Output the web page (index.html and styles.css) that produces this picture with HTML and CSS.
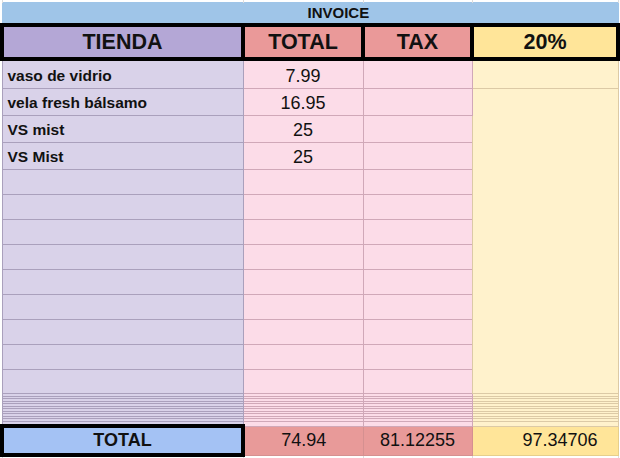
FILE: index.html
```html
<!DOCTYPE html>
<html lang="es">
<head>
<meta charset="utf-8">
<title>Invoice</title>
<link rel="stylesheet" href="styles.css">
</head>
<body>
<table class="sheet">
  <colgroup>
    <col class="c-tienda"><col class="c-total"><col class="c-tax"><col class="c-pct">
  </colgroup>
  <tbody>
    <tr class="strip"><td></td><td></td><td></td><td></td></tr>
    <tr class="title"><td colspan="4">INVOICE</td></tr>
    <tr class="head">
      <th class="p">TIENDA</th><th class="r">TOTAL</th><th class="r">TAX</th><th class="y">20%</th>
    </tr>
    <tr class="row r1"><td class="p name">vaso de vidrio</td><td class="k num">7.99</td><td class="k"></td><td class="y"></td></tr>
    <tr class="row r27"><td class="p name">vela fresh bálsamo</td><td class="k num">16.95</td><td class="k"></td><td class="y merged" rowspan="12"></td></tr>
    <tr class="row r27"><td class="p name">VS mist</td><td class="k num">25</td><td class="k"></td></tr>
    <tr class="row r27"><td class="p name">VS Mist</td><td class="k num">25</td><td class="k"></td></tr>
    <tr class="row r25"><td class="p"></td><td class="k"></td><td class="k"></td></tr>
    <tr class="row r25"><td class="p"></td><td class="k"></td><td class="k"></td></tr>
    <tr class="row r25"><td class="p"></td><td class="k"></td><td class="k"></td></tr>
    <tr class="row r25"><td class="p"></td><td class="k"></td><td class="k"></td></tr>
    <tr class="row r25"><td class="p"></td><td class="k"></td><td class="k"></td></tr>
    <tr class="row r25"><td class="p"></td><td class="k"></td><td class="k"></td></tr>
    <tr class="row r25"><td class="p"></td><td class="k"></td><td class="k"></td></tr>
    <tr class="row r25"><td class="p"></td><td class="k"></td><td class="k"></td></tr>
    <tr class="row r24"><td class="p"></td><td class="k"></td><td class="k"></td></tr>
    <tr class="thin t3"><td class="p"></td><td class="k"></td><td class="k"></td><td class="y"></td></tr>
    <tr class="thin t2"><td class="p"></td><td class="k"></td><td class="k"></td><td class="y"></td></tr>
    <tr class="thin t3"><td class="p"></td><td class="k"></td><td class="k"></td><td class="y"></td></tr>
    <tr class="thin t2"><td class="p"></td><td class="k"></td><td class="k"></td><td class="y"></td></tr>
    <tr class="thin t3"><td class="p"></td><td class="k"></td><td class="k"></td><td class="y"></td></tr>
    <tr class="thin t2"><td class="p"></td><td class="k"></td><td class="k"></td><td class="y"></td></tr>
    <tr class="thin t3"><td class="p"></td><td class="k"></td><td class="k"></td><td class="y"></td></tr>
    <tr class="thin t2"><td class="p"></td><td class="k"></td><td class="k"></td><td class="y"></td></tr>
    <tr class="thin t3"><td class="p"></td><td class="k"></td><td class="k"></td><td class="y"></td></tr>
    <tr class="thin t2"><td class="p"></td><td class="k"></td><td class="k"></td><td class="y"></td></tr>
    <tr class="thin t3"><td class="p"></td><td class="k"></td><td class="k"></td><td class="y"></td></tr>
    <tr class="thin t5"><td class="p"></td><td class="k"></td><td class="k"></td><td class="y"></td></tr>
    <tr class="foot">
      <th class="label">TOTAL</th><td class="rf">74.94</td><td class="rf">81.12255</td><td class="yf">97.34706</td>
    </tr>
    <tr class="end"><td></td><td></td><td></td><td></td></tr>
  </tbody>
</table>
</body>
</html>
```

FILE: styles.css
```css
html, body {
  margin: 0;
  padding: 0;
  background: #ffffff;
}

body {
  font-family: "Liberation Sans", Arial, Helvetica, sans-serif;
  color: #111111;
}

.sheet {
  border-collapse: collapse;
  table-layout: fixed;
  width: 616px;
  margin: 0;
}

.c-tienda { width: 241px; }
.c-total { width: 120px; }
.c-tax { width: 109px; }
.c-pct { width: 146px; }

.sheet td,
.sheet th {
  padding: 0;
  overflow: hidden;
  white-space: nowrap;
}

.strip { height: 2px; }
.strip td {
  font-size: 0;
  line-height: 0;
  background: #ffffff;
  border-left: 1px solid #dcdcdc;
  border-right: 1px solid #dcdcdc;
}

.title { height: 23px; }
.title td {
  background: #9fc5e8;
  border: 1px solid #9fc5e8;
  font-size: 15px;
  font-weight: bold;
  text-align: left;
  padding-left: 305px;
  vertical-align: middle;
}

.head { height: 34px; }
.head th {
  border: 4px solid #000000;
  font-size: 21.5px;
  font-weight: bold;
  text-align: center;
  vertical-align: middle;
}
.head .p { background: #b4a7d6; }
.head .r { background: #ea9999; }
.head .y { background: #ffe599; }

.r1 { height: 29px; }
.r27 { height: 27px; }
.r25 { height: 25px; }
.r24 { height: 24px; }

.row td {
  vertical-align: bottom;
}

.p {
  background: #d9d2e9;
  border: 1px solid #aaa0bc;
}

.k {
  background: #fcdce8;
  border: 1px solid #d0a8b8;
}

.y {
  background: #fff2cc;
  border: 1px solid #dccaa6;
}

.sheet .name {
  font-size: 15.5px;
  font-weight: bold;
  padding: 0 0 3px 5px;
  text-align: left;
}

.sheet .num {
  font-size: 18px;
  text-align: center;
  padding-bottom: 1px;
}

.thin td {
  font-size: 0;
  line-height: 0;
}
.t2 { height: 2px; }
.t3 { height: 3px; }
.t5 { height: 5px; }

.foot { height: 29px; }
.foot th,
.foot td {
  font-size: 18px;
  text-align: center;
  vertical-align: middle;
}
.foot .label {
  background: #a4c2f4;
  border: 4px solid #000000;
  font-weight: bold;
}
.foot .rf {
  background: #e89a99;
  border: 1px solid #d59090;
  font-weight: normal;
}
.sheet .yf {
  background: #ffe599;
  border: 1px solid #e6cf8c;
  font-weight: normal;
  padding-left: 30px;
}

.end { height: 5px; }
.end td {
  font-size: 0;
  line-height: 0;
  background: #ffffff;
  border-left: 1px solid #dcdcdc;
  border-right: 1px solid #dcdcdc;
}
```
